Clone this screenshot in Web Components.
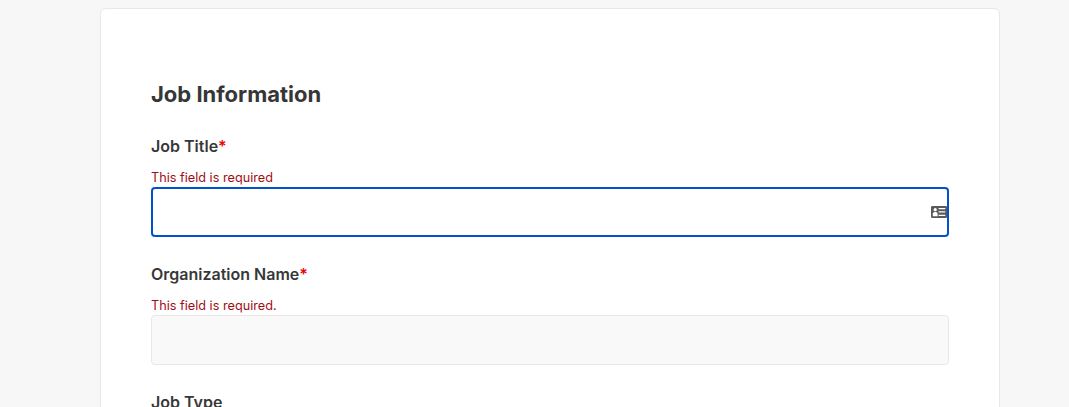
<!DOCTYPE html>
<html><head><meta charset="utf-8"><style>
html,body{margin:0;height:407px;overflow:hidden;background:#f7f7f7;font-family:Inter,sans-serif;color:#333}
</style></head><body>
<job-page>
<form-card>
<h-title>Job Information</h-title>
<form-field label="Job Title" required error="This field is required" state="focus" icon></form-field>
<form-field label="Organization Name" required error="This field is required." state="disabled"></form-field>
<form-field label="Job Type"></form-field>
</form-card>
</job-page>
<template id="t-page"><style>:host{display:flex;justify-content:flex-start;padding:8px 0 0 100px}</style><slot></slot></template>
<template id="t-card"><style>:host{display:block;box-sizing:border-box;width:900px;flex:none;background:#fff;border:1px solid #e8e8e8;border-radius:6px;padding:69px 50px 40px}</style><slot></slot></template>
<template id="t-title"><style>:host{display:block;font:700 22px/32px Inter,sans-serif;color:#363636;margin-bottom:24px}</style><slot></slot></template>
<template id="t-field"><style>
:host{display:block;margin-bottom:25px}
.label{font:600 16px/24px Inter,sans-serif;color:#383838;margin-bottom:10px}
.req{color:#f00000}
.err{font:400 12.7px/19px Inter,sans-serif;color:#a00d16;}
.box{box-sizing:border-box;height:50px;border:1px solid #e8e8e8;border-radius:4px;background:#fff;display:flex;align-items:center;justify-content:flex-end}
.box.focus{border:2px solid #0052cc}
.box.disabled{background:#f9f9f9}
svg{display:block;width:16px;height:12px}
</style><div class="label"></div><div class="err"></div><div class="box"></div></template>
<script>
function def(name,id){customElements.define(name,class extends HTMLElement{constructor(){super();this.attachShadow({mode:'open'}).append(document.getElementById(id).content.cloneNode(true))}})}
def('job-page','t-page');def('form-card','t-card');def('h-title','t-title');
customElements.define('form-field',class extends HTMLElement{
constructor(){super();this.attachShadow({mode:'open'}).append(document.getElementById('t-field').content.cloneNode(true))}
connectedCallback(){const s=this.shadowRoot,l=s.querySelector('.label'),e=s.querySelector('.err'),b=s.querySelector('.box');
l.textContent=this.getAttribute('label');
if(this.hasAttribute('required')){const r=document.createElement('span');r.className='req';r.textContent='*';l.append(r)}
if(this.hasAttribute('error'))e.textContent=this.getAttribute('error');else e.remove();
const st=this.getAttribute('state');if(st)b.classList.add(st);
if(this.hasAttribute('icon'))b.innerHTML='<svg viewBox="0 0 16 12"><path fill="#5a5a5a" fill-rule="evenodd" d="M1.200 0h13.600A1.200 1.200 0 0 1 16 1.200v9.600a1.200 1.200 0 0 1-1.200 1.200H1.200A1.200 1.200 0 0 1 0 10.800V1.200A1.200 1.200 0 0 1 1.200 0zM4.200 2a1.650 1.650 0 1 0 0 3.300 1.650 1.650 0 0 0 0-3.300zM1.800 10.200h4.800V7.700C6.600 6.700 5.500 6 4.200 6S1.800 6.700 1.800 7.700zM7.600 2v1.200h6.700V2zM7.600 5.300v1.200h6.700V5.300zM7.600 8.800V10h6.700V8.800z"/></svg>';
}});
</script>
</body></html>
